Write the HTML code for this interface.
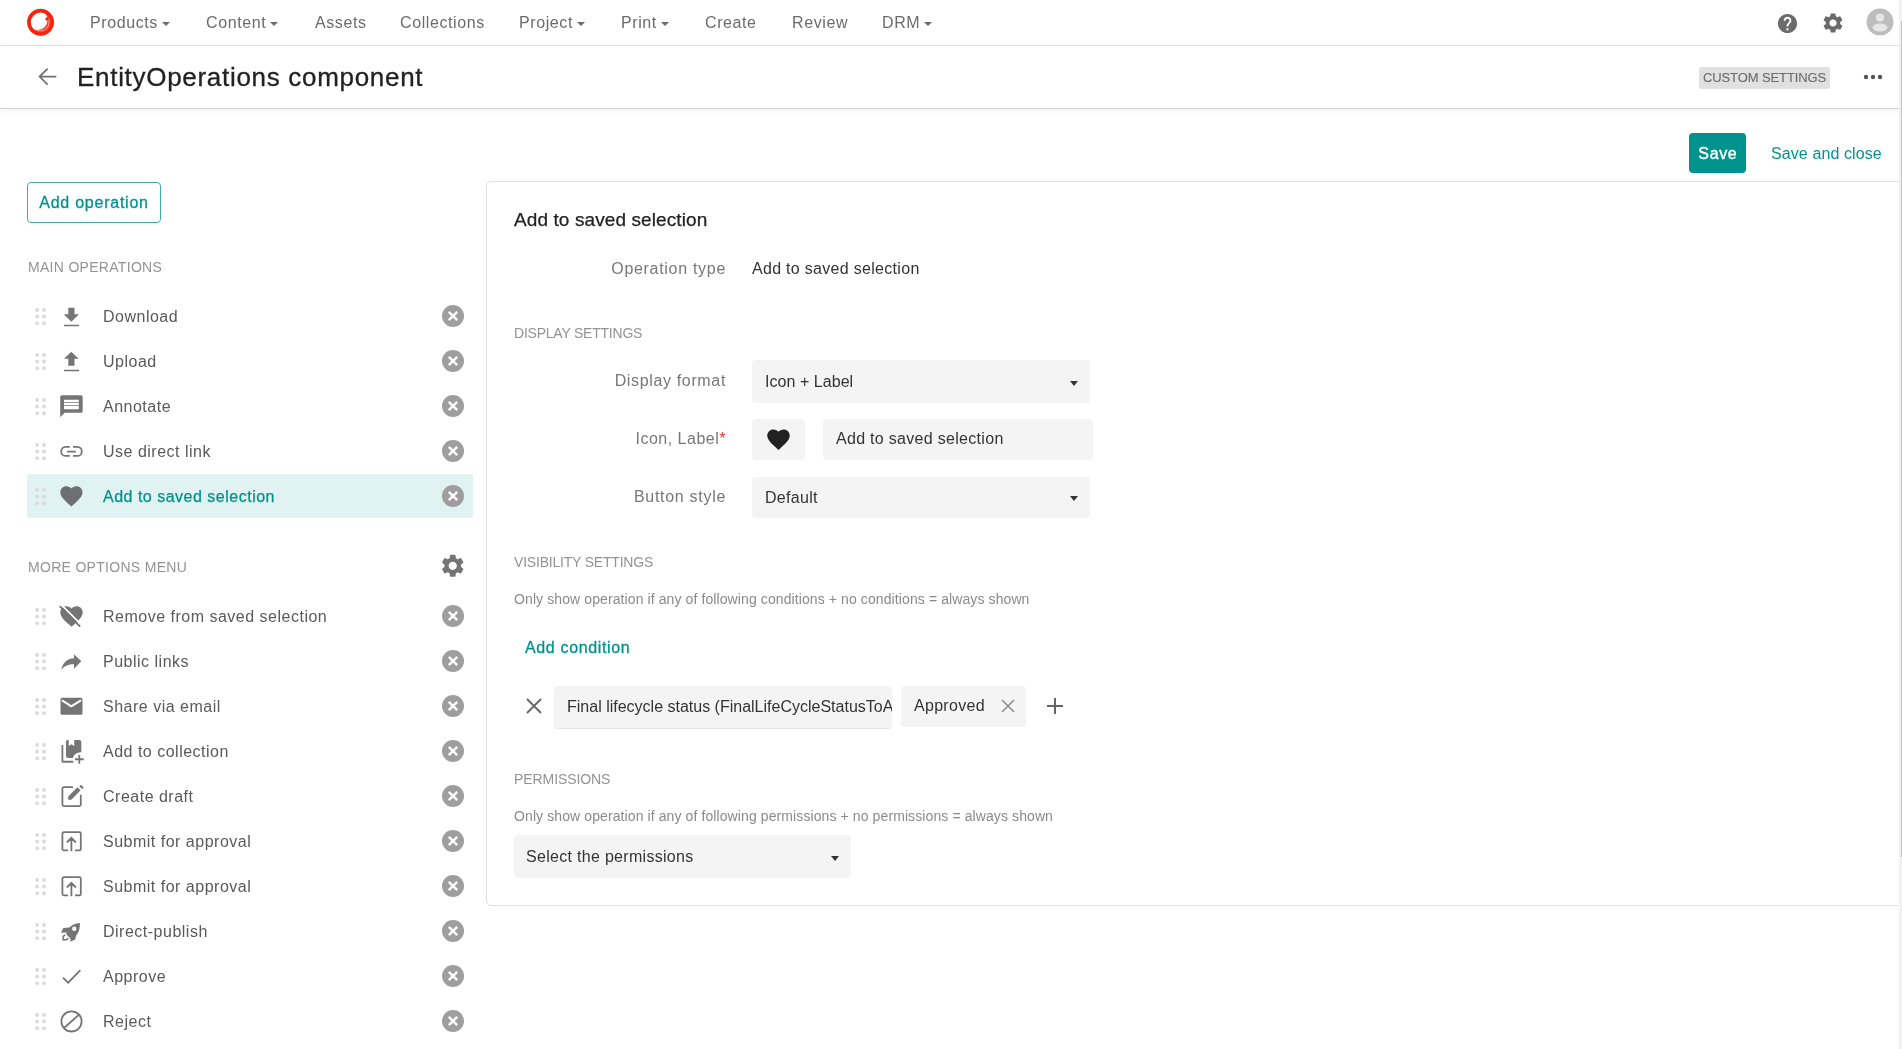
<!DOCTYPE html>
<html><head><meta charset="utf-8">
<style>
*{box-sizing:border-box;margin:0;padding:0}
html,body{width:1902px;height:1049px;overflow:hidden;background:#fff;font-family:"Liberation Sans",sans-serif;}
body{-webkit-font-smoothing:antialiased}
#root{position:absolute;left:0;top:0;width:1902px;height:1049px;will-change:transform;background:#fff}
.a{position:absolute;white-space:nowrap}
#nav{position:absolute;left:0;top:0;width:1899px;height:46px;border-bottom:1px solid #e3e3e3;background:#fff}
.nv{position:absolute;top:13px;font-size:16px;color:#6b6b6b;line-height:20px;letter-spacing:0.6px}
.caret{display:inline-block;width:0;height:0;border-left:4px solid transparent;border-right:4px solid transparent;border-top:4px solid #6b6b6b;vertical-align:middle;margin-left:4px;position:relative;top:0.2px}
#hdr{position:absolute;left:0;top:46px;width:1899px;height:62px;background:#fff;box-shadow:0 1px 0 #d3d3d3,0 2px 8px rgba(0,0,0,0.07)}
#scroll{position:absolute;left:1899px;top:0;width:3px;height:1049px;background:#f1f1f1}
#thumb{position:absolute;left:1901px;top:21px;width:1px;height:836px;background:#c1c1c1}
.lbl{position:absolute;white-space:nowrap;font-size:14px;color:#939393;letter-spacing:0.3px;line-height:18px}
.it{position:absolute;left:27px;width:446px;height:44px}
.it .t{position:absolute;white-space:nowrap;left:76px;top:13px;font-size:16px;color:#5a5a5a;letter-spacing:0.5px;line-height:20px}
.it svg.ic{position:absolute;left:28px;top:6px;width:35px;height:35px;fill:#757575}
.it .dr{position:absolute;left:8px;top:14px;width:11px;height:18px}
.it .x{position:absolute;left:415px;top:11px;width:22px;height:22px}
.sel{background:#e0f2f1;border-radius:3px}
.sel .t{color:#00918c;-webkit-text-stroke:0.25px #00918c}
#panel{position:absolute;left:486px;top:181px;width:1420px;height:725px;border:1px solid #e0e0e0;border-radius:5px 0 0 5px;background:#fff}
.fl{position:absolute;white-space:nowrap;font-size:16px;color:#777;text-align:right;letter-spacing:0.3px;line-height:20px}
.fv{position:absolute;white-space:nowrap;font-size:16px;color:#333;letter-spacing:0.3px;line-height:20px}
.box{position:absolute;background:#f4f4f4;border-radius:4px}
.note{position:absolute;white-space:nowrap;font-size:14px;color:#8a8a8a;letter-spacing:0.1px;line-height:18px}
.dd{position:absolute;width:0;height:0;border-left:4px solid transparent;border-right:4px solid transparent;border-top:5px solid #333}
</style></head><body><div id="root">
<div id="nav">
  <svg class="a" style="left:0;top:0" width="60" height="45" viewBox="0 0 60 45"><defs><clipPath id="lc"><circle cx="40.55" cy="22.3" r="9.9"/></clipPath></defs><circle cx="40.55" cy="22.3" r="11.6" fill="none" stroke="#f7230c" stroke-width="3.7"/><g clip-path="url(#lc)"><path fill="#f7230c" fill-rule="evenodd" opacity="0.85" d="M20 0H60V45H20zM37.32 9.85a10.19 10.19 0 1 0 0 20.38a10.19 10.19 0 1 0 0-20.38z"/><circle cx="40.55" cy="22.3" r="8.4" fill="none" stroke="#fff" stroke-width="0.6" opacity="0.7"/></g><circle cx="47" cy="19" r="1.7" fill="#f7230c"/></svg>
  <div class="nv" style="left:90px">Products<span class="caret"></span></div>
  <div class="nv" style="left:206px">Content<span class="caret"></span></div>
  <div class="nv" style="left:315px">Assets</div>
  <div class="nv" style="left:400px">Collections</div>
  <div class="nv" style="left:519px">Project<span class="caret"></span></div>
  <div class="nv" style="left:621px">Print<span class="caret"></span></div>
  <div class="nv" style="left:705px">Create</div>
  <div class="nv" style="left:792px">Review</div>
  <div class="nv" style="left:882px">DRM<span class="caret"></span></div>
  <svg class="a" style="left:1776px;top:12px" width="23" height="23" viewBox="0 0 24 24"><path fill="#6b6b6b" d="M12 2C6.48 2 2 6.48 2 12s4.48 10 10 10 10-4.48 10-10S17.52 2 12 2zm1 17h-2v-2h2v2zm2.07-7.75l-.9.92C13.45 12.9 13 13.5 13 15h-2v-.5c0-1.1.45-2.1 1.17-2.83l1.24-1.26c.37-.36.59-.86.59-1.41 0-1.1-.9-2-2-2s-2 .9-2 2H8c0-2.21 1.79-4 4-4s4 1.79 4 4c0 .88-.36 1.68-.93 2.25z"/></svg>
  <svg class="a" style="left:1820.5px;top:11.3px" width="24" height="24" viewBox="0 0 24 24"><path fill="#6b6b6b" d="M19.14 12.94c.04-.3.06-.61.06-.94 0-.32-.02-.64-.07-.94l2.03-1.58c.18-.14.23-.41.12-.61l-1.92-3.32c-.12-.22-.37-.29-.59-.22l-2.39.96c-.5-.38-1.03-.7-1.62-.94l-.36-2.54c-.04-.24-.24-.41-.48-.41h-3.84c-.24 0-.43.17-.47.41l-.36 2.54c-.59.24-1.13.57-1.62.94l-2.39-.96c-.22-.08-.47 0-.59.22L2.74 8.87c-.12.21-.08.47.12.61l2.03 1.58c-.05.3-.09.63-.09.94s.02.64.07.94l-2.03 1.58c-.18.14-.23.41-.12.61l1.92 3.32c.12.22.37.29.59.22l2.39-.96c.5.38 1.03.7 1.62.94l.36 2.54c.05.24.24.41.48.41h3.84c.24 0 .44-.17.47-.41l.36-2.54c.59-.24 1.13-.56 1.62-.94l2.39.96c.22.08.47 0 .59-.22l1.92-3.32c.12-.22.07-.47-.12-.61l-2.01-1.58zM12 15.6c-1.98 0-3.6-1.62-3.6-3.6s1.62-3.6 3.6-3.6 3.6 1.62 3.6 3.6-1.62 3.6-3.6 3.6z"/></svg>
  <svg class="a" style="left:1865.5px;top:8px" width="28" height="28" viewBox="0 0 28 28"><circle cx="14" cy="14" r="13.5" fill="#bdbdbd"/><circle cx="14" cy="9.5" r="4" fill="#e6e6e6"/><ellipse cx="14" cy="19.5" rx="7.5" ry="4" fill="#e6e6e6"/></svg>
</div>
<div id="hdr">
  <div class="a" style="left:77px;top:14px;font-size:26px;color:#222;letter-spacing:0.7px;line-height:34px;-webkit-text-stroke:0.3px #222">EntityOperations component</div>
  <div class="a" style="left:1699px;top:21px;width:131px;height:22px;background:#e0e0e0;border-radius:3px;font-size:13px;color:#6b6b6b;line-height:22px;text-align:center;letter-spacing:-0.1px;-webkit-text-stroke:0.1px #6b6b6b">CUSTOM SETTINGS</div>
  <svg class="a" style="left:30px;top:14px" width="35" height="35" viewBox="30 60 35 35"><path d="M56.3 76.6H40.2M47.6 68.6l-8 8 8 8" fill="none" stroke="#707070" stroke-width="1.7"/></svg>
  <svg class="a" style="left:1862px;top:27px" width="22" height="8" viewBox="0 0 22 8"><circle cx="4" cy="4" r="2.2" fill="#555"/><circle cx="11" cy="4" r="2.2" fill="#555"/><circle cx="18" cy="4" r="2.2" fill="#555"/></svg>
</div>

<div class="a" style="left:1689px;top:133px;width:57px;height:40px;background:#00938e;border-radius:4px;color:#fff;font-size:16px;line-height:41px;text-align:center;-webkit-text-stroke:0.35px #fff;letter-spacing:0.6px;text-indent:0.6px">Save</div>
<div class="a" style="left:1771px;top:144px;font-size:16px;color:#00938e;line-height:20px;letter-spacing:0.1px">Save and close</div>
<div class="a" style="left:27px;top:182px;width:134px;height:41px;border:1px solid #42aaa5;border-radius:4px;color:#00938e;font-size:16px;line-height:39px;text-align:center;-webkit-text-stroke:0.3px #00938e;letter-spacing:0.75px">Add operation</div>
<div class="lbl" style="left:28px;top:258px">MAIN OPERATIONS</div>
<div class="lbl" style="left:28px;top:558px">MORE OPTIONS MENU</div>
<svg class="a" style="left:439.25px;top:551.6px" width="27.5" height="27.5" viewBox="0 0 24 24"><path fill="#757575" d="M19.14 12.94c.04-.3.06-.61.06-.94 0-.32-.02-.64-.07-.94l2.03-1.58c.18-.14.23-.41.12-.61l-1.92-3.32c-.12-.22-.37-.29-.59-.22l-2.39.96c-.5-.38-1.030-.7-1.62-.94l-.36-2.54c-.04-.24-.24-.41-.48-.41h-3.84c-.24 0-.43.17-.47.41l-.36 2.54c-.59.24-1.13.57-1.62.94l-2.39-.96c-.22-.08-.47 0-.59.22L2.74 8.870c-.12.21-.08.47.12.61l2.03 1.58c-.05.3-.09.63-.09.94s.02.64.07.94l-2.03 1.58c-.18.14-.23.41-.12.61l1.92 3.32c.12.22.37.29.59.22l2.39-.96c.5.38 1.03.7 1.62.94l.36 2.54c.05.24.24.41.48.41h3.84c.24 0 .44-.17.47-.41l.36-2.54c.59-.24 1.13-.56 1.62-.94l2.39.96c.22.08.47 0 .59-.22l1.92-3.32c.12-.22.07-.47-.12-.61l-2.010-1.58zM12 15.6c-1.98 0-3.6-1.620-3.6-3.6s1.62-3.6 3.6-3.6 3.6 1.62 3.6 3.6-1.62 3.6-3.6 3.6z"/></svg>
<!--L-->
<div class="it" style="top:294px"><svg class="dr" viewBox="0 0 11 18"><circle cx="2.1" cy="1.9" r="2" fill="#dcdcdc"/><circle cx="8.9" cy="1.9" r="2" fill="#dcdcdc"/><circle cx="2.1" cy="8.6" r="2" fill="#dcdcdc"/><circle cx="8.9" cy="8.6" r="2" fill="#dcdcdc"/><circle cx="2.1" cy="15.3" r="2" fill="#dcdcdc"/><circle cx="8.9" cy="15.3" r="2" fill="#dcdcdc"/></svg><svg class="ic" viewBox="0 0 35 35"><path d="M13.3 7.8h6.2v6.5H24l-7.7 7.4-7.5-7.4h4.5zM9 24.7h15v1.6H9z"/></svg><div class="t">Download</div><svg class="x" viewBox="0 0 22 22"><circle cx="11" cy="11" r="11" fill="#9e9e9e"/><path d="M6.8 6.8l8.4 8.4M15.2 6.8l-8.4 8.4" stroke="#fff" stroke-width="2.4"/></svg></div>
<div class="it" style="top:339px"><svg class="dr" viewBox="0 0 11 18"><circle cx="2.1" cy="1.9" r="2" fill="#dcdcdc"/><circle cx="8.9" cy="1.9" r="2" fill="#dcdcdc"/><circle cx="2.1" cy="8.6" r="2" fill="#dcdcdc"/><circle cx="8.9" cy="8.6" r="2" fill="#dcdcdc"/><circle cx="2.1" cy="15.3" r="2" fill="#dcdcdc"/><circle cx="8.9" cy="15.3" r="2" fill="#dcdcdc"/></svg><svg class="ic" viewBox="0 0 35 35"><path d="M16.3 6.7l7.4 7h-4.2v7h-6.2v-7H9zM9 24.7h15v1.6H9z"/></svg><div class="t">Upload</div><svg class="x" viewBox="0 0 22 22"><circle cx="11" cy="11" r="11" fill="#9e9e9e"/><path d="M6.8 6.8l8.4 8.4M15.2 6.8l-8.4 8.4" stroke="#fff" stroke-width="2.4"/></svg></div>
<div class="it" style="top:384px"><svg class="dr" viewBox="0 0 11 18"><circle cx="2.1" cy="1.9" r="2" fill="#dcdcdc"/><circle cx="8.9" cy="1.9" r="2" fill="#dcdcdc"/><circle cx="2.1" cy="8.6" r="2" fill="#dcdcdc"/><circle cx="8.9" cy="8.6" r="2" fill="#dcdcdc"/><circle cx="2.1" cy="15.3" r="2" fill="#dcdcdc"/><circle cx="8.9" cy="15.3" r="2" fill="#dcdcdc"/></svg><svg class="ic" viewBox="0 0 35 35"><path fill-rule="evenodd" d="M7.3 5.2h18.6c1 0 1.8.8 1.8 1.8v14c0 1-.8 1.8-1.8 1.8H9.7l-4.5 4.4V7c0-1 .9-1.8 2.1-1.8zM9 9.7v2.5h14.8V9.7zM9 13v2.3h14.8V13zM9 15.9v3.3h14.8v-3.3z"/></svg><div class="t">Annotate</div><svg class="x" viewBox="0 0 22 22"><circle cx="11" cy="11" r="11" fill="#9e9e9e"/><path d="M6.8 6.8l8.4 8.4M15.2 6.8l-8.4 8.4" stroke="#fff" stroke-width="2.4"/></svg></div>
<div class="it" style="top:429px"><svg class="dr" viewBox="0 0 11 18"><circle cx="2.1" cy="1.9" r="2" fill="#dcdcdc"/><circle cx="8.9" cy="1.9" r="2" fill="#dcdcdc"/><circle cx="2.1" cy="8.6" r="2" fill="#dcdcdc"/><circle cx="8.9" cy="8.6" r="2" fill="#dcdcdc"/><circle cx="2.1" cy="15.3" r="2" fill="#dcdcdc"/><circle cx="8.9" cy="15.3" r="2" fill="#dcdcdc"/></svg><svg class="ic" viewBox="0 0 35 35"><path fill="none" stroke="#757575" stroke-width="1.8" d="M14.8 11.9h-4.1a4.5 4.5 0 0 0 0 9h4.1M18 11.9h4.3a4.5 4.5 0 0 1 0 9H18"/><path d="M12.2 15.7h8.6v1.8h-8.6z"/></svg><div class="t">Use direct link</div><svg class="x" viewBox="0 0 22 22"><circle cx="11" cy="11" r="11" fill="#9e9e9e"/><path d="M6.8 6.8l8.4 8.4M15.2 6.8l-8.4 8.4" stroke="#fff" stroke-width="2.4"/></svg></div>
<div class="it sel" style="top:474px"><svg class="dr" viewBox="0 0 11 18"><circle cx="2.1" cy="1.9" r="2" fill="#dcdcdc"/><circle cx="8.9" cy="1.9" r="2" fill="#dcdcdc"/><circle cx="2.1" cy="8.6" r="2" fill="#dcdcdc"/><circle cx="8.9" cy="8.6" r="2" fill="#dcdcdc"/><circle cx="2.1" cy="15.3" r="2" fill="#dcdcdc"/><circle cx="8.9" cy="15.3" r="2" fill="#dcdcdc"/></svg><svg class="ic" viewBox="0 0 35 35"><path fill="#6a7170" transform="translate(3.08 2.87) scale(1.11)" d="M12 21.35l-1.45-1.32C5.4 15.36 2 12.28 2 8.5 2 5.42 4.42 3 7.5 3c1.74 0 3.41.81 4.5 2.09C13.09 3.81 14.76 3 16.5 3 19.58 3 22 5.42 22 8.5c0 3.78-3.4 6.86-8.55 11.54L12 21.35z"/></svg><div class="t">Add to saved selection</div><svg class="x" viewBox="0 0 22 22"><circle cx="11" cy="11" r="11" fill="#9e9e9e"/><path d="M6.8 6.8l8.4 8.4M15.2 6.8l-8.4 8.4" stroke="#fff" stroke-width="2.4"/></svg></div>
<div class="it" style="top:594px"><svg class="dr" viewBox="0 0 11 18"><circle cx="2.1" cy="1.9" r="2" fill="#dcdcdc"/><circle cx="8.9" cy="1.9" r="2" fill="#dcdcdc"/><circle cx="2.1" cy="8.6" r="2" fill="#dcdcdc"/><circle cx="8.9" cy="8.6" r="2" fill="#dcdcdc"/><circle cx="2.1" cy="15.3" r="2" fill="#dcdcdc"/><circle cx="8.9" cy="15.3" r="2" fill="#dcdcdc"/></svg><svg class="ic" viewBox="0 0 35 35"><path transform="translate(3.06 2.94) scale(1.12)" d="M12 21.35l-1.45-1.32C5.4 15.36 2 12.28 2 8.5 2 5.42 4.42 3 7.5 3c1.74 0 3.41.81 4.5 2.09C13.09 3.81 14.76 3 16.5 3 19.58 3 22 5.42 22 8.5c0 3.78-3.4 6.86-8.55 11.54L12 21.35z"/><path d="M4.2 5.6L26 27.4" stroke="#fff" stroke-width="1.6" transform="translate(1.5 -1.5)"/><path d="M5.2 6.6L24.6 26" stroke="#757575" stroke-width="1.8" stroke-linecap="round"/></svg><div class="t">Remove from saved selection</div><svg class="x" viewBox="0 0 22 22"><circle cx="11" cy="11" r="11" fill="#9e9e9e"/><path d="M6.8 6.8l8.4 8.4M15.2 6.8l-8.4 8.4" stroke="#fff" stroke-width="2.4"/></svg></div>
<div class="it" style="top:639px"><svg class="dr" viewBox="0 0 11 18"><circle cx="2.1" cy="1.9" r="2" fill="#dcdcdc"/><circle cx="8.9" cy="1.9" r="2" fill="#dcdcdc"/><circle cx="2.1" cy="8.6" r="2" fill="#dcdcdc"/><circle cx="8.9" cy="8.6" r="2" fill="#dcdcdc"/><circle cx="2.1" cy="15.3" r="2" fill="#dcdcdc"/><circle cx="8.9" cy="15.3" r="2" fill="#dcdcdc"/></svg><svg class="ic" viewBox="0 0 35 35"><path d="M19 9.2l7.3 7.1-7.3 7.4v-4.4c-5.8 0-9.5 1.8-12.7 5.4 1.3-6.5 5.4-11.2 12.7-11.5z"/></svg><div class="t">Public links</div><svg class="x" viewBox="0 0 22 22"><circle cx="11" cy="11" r="11" fill="#9e9e9e"/><path d="M6.8 6.8l8.4 8.4M15.2 6.8l-8.4 8.4" stroke="#fff" stroke-width="2.4"/></svg></div>
<div class="it" style="top:684px"><svg class="dr" viewBox="0 0 11 18"><circle cx="2.1" cy="1.9" r="2" fill="#dcdcdc"/><circle cx="8.9" cy="1.9" r="2" fill="#dcdcdc"/><circle cx="2.1" cy="8.6" r="2" fill="#dcdcdc"/><circle cx="8.9" cy="8.6" r="2" fill="#dcdcdc"/><circle cx="2.1" cy="15.3" r="2" fill="#dcdcdc"/><circle cx="8.9" cy="15.3" r="2" fill="#dcdcdc"/></svg><svg class="ic" viewBox="0 0 35 35"><path fill-rule="evenodd" d="M7 7.8h19c.8 0 1.5.7 1.5 1.5v14c0 .8-.7 1.5-1.5 1.5H7c-.8 0-1.5-.7-1.5-1.5v-14c0-.8.7-1.5 1.5-1.5z"/><path d="M7.5 10.7l8.8 5.6 9.2-5.6" fill="none" stroke="#fff" stroke-width="2" stroke-linecap="round" stroke-linejoin="round"/></svg><div class="t">Share via email</div><svg class="x" viewBox="0 0 22 22"><circle cx="11" cy="11" r="11" fill="#9e9e9e"/><path d="M6.8 6.8l8.4 8.4M15.2 6.8l-8.4 8.4" stroke="#fff" stroke-width="2.4"/></svg></div>
<div class="it" style="top:729px"><svg class="dr" viewBox="0 0 11 18"><circle cx="2.1" cy="1.9" r="2" fill="#dcdcdc"/><circle cx="8.9" cy="1.9" r="2" fill="#dcdcdc"/><circle cx="2.1" cy="8.6" r="2" fill="#dcdcdc"/><circle cx="8.9" cy="8.6" r="2" fill="#dcdcdc"/><circle cx="2.1" cy="15.3" r="2" fill="#dcdcdc"/><circle cx="8.9" cy="15.3" r="2" fill="#dcdcdc"/></svg><svg class="ic" viewBox="0 0 35 35"><path d="M6.5 10h1.8v15.5c0 .1.1.2.2.2H18l.6 2H8.3c-1 0-1.8-.8-1.8-1.8z"/><path fill-rule="evenodd" d="M13 5h11.3c1.1 0 2 .9 2 2v10.4c-3.5-.6-7 1.5-8.6 5.6H13c-1.1 0-2-.9-2-2V7c0-1.1.9-2 2-2zM13.7 5v6l2.6-1.8 2.9 1.8V5z"/><path d="M23.4 20h1.8v3.3h3.5v1.9h-3.5v3.5h-1.8v-3.5H20v-1.9h3.4z"/></svg><div class="t">Add to collection</div><svg class="x" viewBox="0 0 22 22"><circle cx="11" cy="11" r="11" fill="#9e9e9e"/><path d="M6.8 6.8l8.4 8.4M15.2 6.8l-8.4 8.4" stroke="#fff" stroke-width="2.4"/></svg></div>
<div class="it" style="top:774px"><svg class="dr" viewBox="0 0 11 18"><circle cx="2.1" cy="1.9" r="2" fill="#dcdcdc"/><circle cx="8.9" cy="1.9" r="2" fill="#dcdcdc"/><circle cx="2.1" cy="8.6" r="2" fill="#dcdcdc"/><circle cx="8.9" cy="8.6" r="2" fill="#dcdcdc"/><circle cx="2.1" cy="15.3" r="2" fill="#dcdcdc"/><circle cx="8.9" cy="15.3" r="2" fill="#dcdcdc"/></svg><svg class="ic" viewBox="0 0 35 35"><path fill="none" stroke="#757575" stroke-width="1.8" d="M18 7.2H8.9c-.8 0-1.5.7-1.5 1.5v15.9c0 .8.7 1.5 1.5 1.5h15.4c.8 0 1.5-.7 1.5-1.5v-9.9"/><path d="M13.2 16.5l9.2-9.3 3.2 3-9.2 9.5h-3.2z"/><path d="M24.3 6.2l1.6-1.4 2.8 2.6-1.5 1.7z"/></svg><div class="t">Create draft</div><svg class="x" viewBox="0 0 22 22"><circle cx="11" cy="11" r="11" fill="#9e9e9e"/><path d="M6.8 6.8l8.4 8.4M15.2 6.8l-8.4 8.4" stroke="#fff" stroke-width="2.4"/></svg></div>
<div class="it" style="top:819px"><svg class="dr" viewBox="0 0 11 18"><circle cx="2.1" cy="1.9" r="2" fill="#dcdcdc"/><circle cx="8.9" cy="1.9" r="2" fill="#dcdcdc"/><circle cx="2.1" cy="8.6" r="2" fill="#dcdcdc"/><circle cx="8.9" cy="8.6" r="2" fill="#dcdcdc"/><circle cx="2.1" cy="15.3" r="2" fill="#dcdcdc"/><circle cx="8.9" cy="15.3" r="2" fill="#dcdcdc"/></svg><svg class="ic" viewBox="0 0 35 35"><path fill="none" stroke="#757575" stroke-width="1.8" d="M13 25.4H8.9c-.8 0-1.5-.7-1.5-1.5V8.7c0-.8.7-1.5 1.5-1.5h15.4c.8 0 1.5.7 1.5 1.5v15.2c0 .8-.7 1.5-1.5 1.5H20M16.4 12.8v13.5M11.9 17.5l4.5-4.6 4.5 4.6"/></svg><div class="t">Submit for approval</div><svg class="x" viewBox="0 0 22 22"><circle cx="11" cy="11" r="11" fill="#9e9e9e"/><path d="M6.8 6.8l8.4 8.4M15.2 6.8l-8.4 8.4" stroke="#fff" stroke-width="2.4"/></svg></div>
<div class="it" style="top:864px"><svg class="dr" viewBox="0 0 11 18"><circle cx="2.1" cy="1.9" r="2" fill="#dcdcdc"/><circle cx="8.9" cy="1.9" r="2" fill="#dcdcdc"/><circle cx="2.1" cy="8.6" r="2" fill="#dcdcdc"/><circle cx="8.9" cy="8.6" r="2" fill="#dcdcdc"/><circle cx="2.1" cy="15.3" r="2" fill="#dcdcdc"/><circle cx="8.9" cy="15.3" r="2" fill="#dcdcdc"/></svg><svg class="ic" viewBox="0 0 35 35"><path fill="none" stroke="#757575" stroke-width="1.8" d="M13 25.4H8.9c-.8 0-1.5-.7-1.5-1.5V8.7c0-.8.7-1.5 1.5-1.5h15.4c.8 0 1.5.7 1.5 1.5v15.2c0 .8-.7 1.5-1.5 1.5H20M16.4 12.8v13.5M11.9 17.5l4.5-4.6 4.5 4.6"/></svg><div class="t">Submit for approval</div><svg class="x" viewBox="0 0 22 22"><circle cx="11" cy="11" r="11" fill="#9e9e9e"/><path d="M6.8 6.8l8.4 8.4M15.2 6.8l-8.4 8.4" stroke="#fff" stroke-width="2.4"/></svg></div>
<div class="it" style="top:909px"><svg class="dr" viewBox="0 0 11 18"><circle cx="2.1" cy="1.9" r="2" fill="#dcdcdc"/><circle cx="8.9" cy="1.9" r="2" fill="#dcdcdc"/><circle cx="2.1" cy="8.6" r="2" fill="#dcdcdc"/><circle cx="8.9" cy="8.6" r="2" fill="#dcdcdc"/><circle cx="2.1" cy="15.3" r="2" fill="#dcdcdc"/><circle cx="8.9" cy="15.3" r="2" fill="#dcdcdc"/></svg><svg class="ic" viewBox="0 0 35 35"><path fill-rule="evenodd" d="M24.9 8.1c-4.8.2-9.3 2.6-12.3 6.3l-1.4 4.8 4.3 4.3 4.7-1.6c3.4-3.1 4.9-8.3 4.7-13.8zM19.3 11.5a2.2 2.2 0 1 0 0 4.4 2.2 2.2 0 1 0 0-4.4z"/><path d="M14.5 12.5l-6.2.5-2.3 4.7 6-.2zM21 18.8l-.7 5.6-5.1 2.3.6-5.2z"/><path fill="none" stroke="#757575" stroke-width="1.5" stroke-linejoin="round" d="M10.2 19.8l-2 1.5-.2 3.5 3.6-.1 1.6-1.8"/></svg><div class="t">Direct-publish</div><svg class="x" viewBox="0 0 22 22"><circle cx="11" cy="11" r="11" fill="#9e9e9e"/><path d="M6.8 6.8l8.4 8.4M15.2 6.8l-8.4 8.4" stroke="#fff" stroke-width="2.4"/></svg></div>
<div class="it" style="top:954px"><svg class="dr" viewBox="0 0 11 18"><circle cx="2.1" cy="1.9" r="2" fill="#dcdcdc"/><circle cx="8.9" cy="1.9" r="2" fill="#dcdcdc"/><circle cx="2.1" cy="8.6" r="2" fill="#dcdcdc"/><circle cx="8.9" cy="8.6" r="2" fill="#dcdcdc"/><circle cx="2.1" cy="15.3" r="2" fill="#dcdcdc"/><circle cx="8.9" cy="15.3" r="2" fill="#dcdcdc"/></svg><svg class="ic" viewBox="0 0 35 35"><path fill="none" stroke="#757575" stroke-width="1.8" d="M8 17.7l5.2 5 12.1-12.5"/></svg><div class="t">Approve</div><svg class="x" viewBox="0 0 22 22"><circle cx="11" cy="11" r="11" fill="#9e9e9e"/><path d="M6.8 6.8l8.4 8.4M15.2 6.8l-8.4 8.4" stroke="#fff" stroke-width="2.4"/></svg></div>
<div class="it" style="top:999px"><svg class="dr" viewBox="0 0 11 18"><circle cx="2.1" cy="1.9" r="2" fill="#dcdcdc"/><circle cx="8.9" cy="1.9" r="2" fill="#dcdcdc"/><circle cx="2.1" cy="8.6" r="2" fill="#dcdcdc"/><circle cx="8.9" cy="8.6" r="2" fill="#dcdcdc"/><circle cx="2.1" cy="15.3" r="2" fill="#dcdcdc"/><circle cx="8.9" cy="15.3" r="2" fill="#dcdcdc"/></svg><svg class="ic" viewBox="0 0 35 35"><circle cx="16.5" cy="16.4" r="10.1" fill="none" stroke="#757575" stroke-width="1.8"/><path d="M9 23L24 9.7" stroke="#757575" stroke-width="1.8"/></svg><div class="t">Reject</div><svg class="x" viewBox="0 0 22 22"><circle cx="11" cy="11" r="11" fill="#9e9e9e"/><path d="M6.8 6.8l8.4 8.4M15.2 6.8l-8.4 8.4" stroke="#fff" stroke-width="2.4"/></svg></div>
<!--/L-->
<div id="panel">
  <div class="a" style="left:27px;top:26px;font-size:19px;color:#222;line-height:24px;letter-spacing:0.1px;-webkit-text-stroke:0.25px #222">Add to saved selection</div>
  <div class="fl" style="left:0;width:239px;top:77px;letter-spacing:0.7px">Operation type</div>
  <div class="fv" style="left:265px;top:77px">Add to saved selection</div>
  <div class="lbl" style="left:27px;top:142px;letter-spacing:-0.22px">DISPLAY SETTINGS</div>
  <div class="fl" style="left:0;width:239px;top:189px;letter-spacing:0.65px">Display format</div>
  <div class="box" style="left:265px;top:178px;width:338px;height:43px"><div class="fv" style="left:13px;top:12px;letter-spacing:0.05px">Icon + Label</div><div class="dd" style="left:318px;top:21px"></div></div>
  <div class="fl" style="left:0;width:239px;top:247px;letter-spacing:0.5px">Icon, Label<span style="color:#e53935">*</span></div>
  <div class="box" style="left:265px;top:237px;width:53px;height:41px"><svg class="a" style="left:13px;top:7px" width="27" height="27" viewBox="0 0 24 24"><path fill="#222" d="M12 21.35l-1.45-1.32C5.4 15.36 2 12.28 2 8.5 2 5.42 4.42 3 7.5 3c1.74 0 3.41.81 4.5 2.09C13.09 3.81 14.76 3 16.5 3 19.58 3 22 5.42 22 8.5c0 3.78-3.4 6.86-8.55 11.540L12 21.35z"/></svg></div>
  <div class="box" style="left:336px;top:237px;width:270px;height:41px"><div class="fv" style="left:13px;top:10px">Add to saved selection</div></div>
  <div class="fl" style="left:0;width:239px;top:305px;letter-spacing:0.7px">Button style</div>
  <div class="box" style="left:265px;top:295px;width:338px;height:41px"><div class="fv" style="left:13px;top:11px">Default</div><div class="dd" style="left:318px;top:19px"></div></div>
  <div class="lbl" style="left:27px;top:371px;letter-spacing:-0.2px">VISIBILITY SETTINGS</div>
  <div class="note" style="left:27px;top:408px">Only show operation if any of following conditions + no conditions = always shown</div>
  <div class="a" style="left:38px;top:456px;font-size:16px;color:#00938e;line-height:20px;-webkit-text-stroke:0.3px #00938e;letter-spacing:0.65px">Add condition</div>
  <svg class="a" style="left:39px;top:516px" width="16" height="16" viewBox="0 0 16 16"><path d="M1 1l14 14M15 1L1 15" stroke="#666" stroke-width="1.8"/></svg>
  <div class="box" style="left:67px;top:504px;width:338px;height:43px;border-bottom:1px solid #e8e8e8;overflow:hidden"><div class="fv" style="left:13px;top:11px;letter-spacing:0">Final lifecycle status (FinalLifeCycleStatusToApproved)</div></div>
  <div class="box" style="left:414px;top:504px;width:125px;height:41px"><div class="fv" style="left:13px;top:10px">Approved</div><svg class="a" style="left:100px;top:13px" width="14" height="14" viewBox="0 0 14 14"><path d="M1 1l12 12M13 1L1 13" stroke="#8a8a8a" stroke-width="1.5"/></svg></div>
  <svg class="a" style="left:560px;top:516px" width="16" height="16" viewBox="0 0 16 16"><path d="M8 0v16M0 8h16" stroke="#666" stroke-width="2"/></svg>
  <div class="lbl" style="left:27px;top:588px;letter-spacing:-0.08px">PERMISSIONS</div>
  <div class="note" style="left:27px;top:625px">Only show operation if any of following permissions + no permissions = always shown</div>
  <div class="box" style="left:27px;top:653px;width:337px;height:43px"><div class="fv" style="left:12px;top:12px">Select the permissions</div><div class="dd" style="left:317px;top:21px"></div></div>
</div>
<div id="scroll"></div><div id="thumb"></div>
</div></body></html>
